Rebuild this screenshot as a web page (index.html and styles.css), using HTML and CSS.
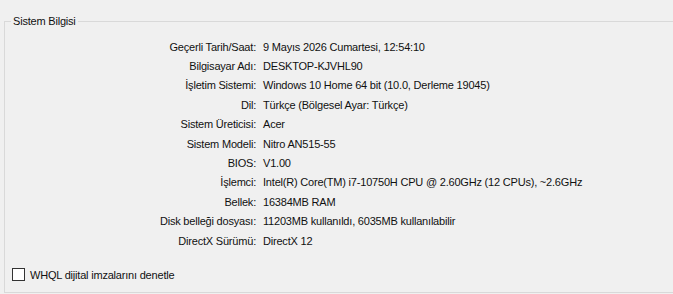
FILE: index.html
```html
<!DOCTYPE html>
<html lang="tr">
<head>
<meta charset="utf-8">
<link rel="stylesheet" href="styles.css">
</head>
<body>
<fieldset class="group">
  <legend class="group-title">Sistem Bilgisi</legend>
  <div class="info">
    <div class="label">Geçerli Tarih/Saat:</div><div class="value">9 Mayıs 2026 Cumartesi, 12:54:10</div>
    <div class="label">Bilgisayar Adı:</div><div class="value">DESKTOP-KJVHL90</div>
    <div class="label">İşletim Sistemi:</div><div class="value">Windows 10 Home 64 bit (10.0, Derleme 19045)</div>
    <div class="label">Dil:</div><div class="value">Türkçe (Bölgesel Ayar: Türkçe)</div>
    <div class="label">Sistem Üreticisi:</div><div class="value">Acer</div>
    <div class="label">Sistem Modeli:</div><div class="value">Nitro AN515-55</div>
    <div class="label">BIOS:</div><div class="value">V1.00</div>
    <div class="label">İşlemci:</div><div class="value">Intel(R) Core(TM) i7-10750H CPU @ 2.60GHz (12 CPUs), ~2.6GHz</div>
    <div class="label">Bellek:</div><div class="value">16384MB RAM</div>
    <div class="label">Disk belleği dosyası:</div><div class="value">11203MB kullanıldı, 6035MB kullanılabilir</div>
    <div class="label">DirectX Sürümü:</div><div class="value">DirectX 12</div>
  </div>
  <label class="check">
    <span class="box"></span>
    <span class="check-text">WHQL dijital imzalarını denetle</span>
  </label>
</fieldset>
</body>
</html>
```
FILE: styles.css
```css
html, body {
  margin: 0;
  padding: 0;
  background: #f0f0f0;
  overflow: hidden;
}
body {
  font-family: "Liberation Sans", Arial, sans-serif;
  font-size: 11px;
  letter-spacing: -0.2px;
  color: #111;
  width: 673px;
  height: 294px;
}
.group {
  margin: 14px 0 0 4px;
  padding: 0;
  width: 669px;
  height: 279px;
  box-sizing: border-box;
  border: 1px solid #d9d9d9;
  border-right: none;
}
.group-title {
  margin-left: 6px;
  padding: 0 2px;
  line-height: 14px;
}
.info {
  display: grid;
  grid-template-columns: 251px auto;
  column-gap: 7px;
  grid-auto-rows: 19.4px;
  align-items: center;
  margin-top: 9px;
}
.label {
  text-align: right;
  white-space: nowrap;
}
.value {
  white-space: nowrap;
}
.check {
  display: flex;
  align-items: center;
  gap: 5px;
  margin: 18px 0 0 7px;
}
.box {
  width: 11px;
  height: 11px;
  border: 1px solid #333;
  background: #fff;
}
```
